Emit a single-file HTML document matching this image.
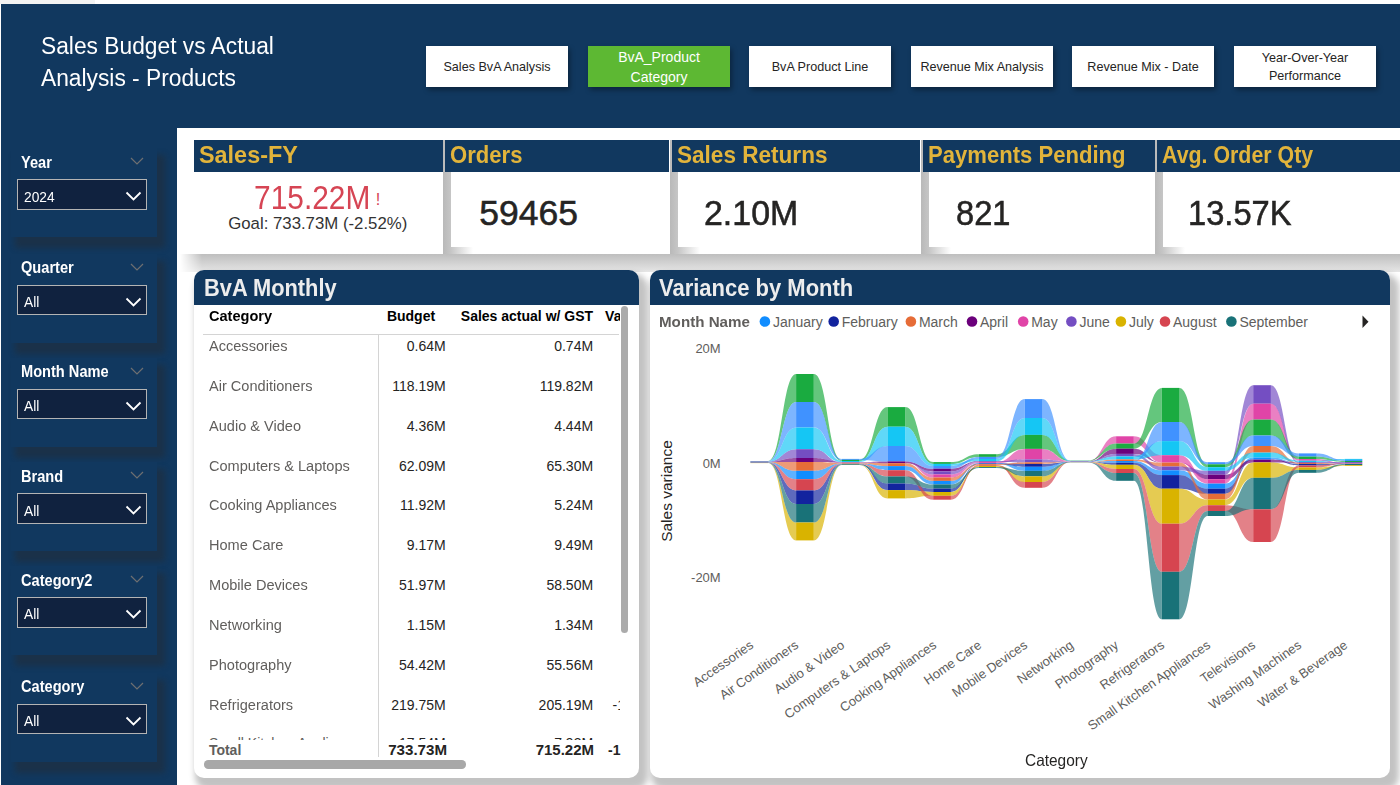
<!DOCTYPE html>
<html><head><meta charset="utf-8"><style>
html,body{margin:0;padding:0;}
body{width:1400px;height:785px;position:relative;overflow:hidden;background:#FFFFFF;font-family:"Liberation Sans", sans-serif;}
.t{position:absolute;white-space:nowrap;}
.btn{position:absolute;display:flex;align-items:center;justify-content:center;text-align:center;font-size:12.6px;line-height:18px;box-shadow:2px 3px 5px rgba(0,0,0,0.35);}
</style></head><body>
<div style="position:absolute;left:1px;top:4px;width:1399px;height:781px;background:#11385F;"></div>
<div style="position:absolute;left:0px;top:0px;width:95px;height:4px;background:#F3F3F3;"></div>
<div class="t" style="left:40.8px;top:35.33px;font-size:23px;line-height:23px;color:#fff;font-weight:400;transform:scaleX(0.99);transform-origin:left center;">Sales Budget vs Actual</div>
<div class="t" style="left:40.8px;top:66.73px;font-size:23px;line-height:23px;color:#fff;font-weight:400;transform:scaleX(0.99);transform-origin:left center;">Analysis - Products</div>
<div class="btn" style="left:426px;top:46px;width:142px;height:41px;background:#FFFFFF;color:#252423;">Sales BvA Analysis</div>
<div class="btn" style="left:588px;top:46px;width:142px;height:41px;background:#5DB833;color:#FFFFFF;font-size:14px;line-height:19.6px;padding-top:2px;box-sizing:border-box;">BvA_Product<br>Category</div>
<div class="btn" style="left:749px;top:46px;width:142px;height:41px;background:#FFFFFF;color:#252423;">BvA Product Line</div>
<div class="btn" style="left:911px;top:46px;width:142px;height:41px;background:#FFFFFF;color:#252423;">Revenue Mix Analysis</div>
<div class="btn" style="left:1072px;top:46px;width:142px;height:41px;background:#FFFFFF;color:#252423;">Revenue Mix - Date</div>
<div class="btn" style="left:1234px;top:46px;width:142px;height:41px;background:#FFFFFF;color:#252423;">Year-Over-Year<br>Performance</div>
<div style="position:absolute;left:11px;top:148.4px;width:146px;height:89px;background:#11385F;box-shadow:6px 9px 6px 2px rgba(40,40,42,0.42);"></div>
<div class="t" style="left:21px;top:153.93px;font-size:16.5px;line-height:16.5px;color:#FFFFFF;font-weight:700;transform:scaleX(0.885);transform-origin:left center;">Year</div>
<svg style="position:absolute;left:129.5px;top:157.4px" width="14" height="9"><polyline points="1,1 7,7 13,1" fill="none" stroke="#6E6F71" stroke-width="1.2"/></svg>
<div style="position:absolute;left:17px;top:179.4px;width:130px;height:30.5px;background:#10223F;border:1.5px solid #B4B4B4;box-sizing:border-box;"></div>
<div class="t" style="left:24px;top:189.53px;font-size:14.5px;line-height:14.5px;color:#FFFFFF;font-weight:400;transform:scaleX(0.95);transform-origin:left center;">2024</div>
<svg style="position:absolute;left:124.8px;top:191.4px" width="18" height="11"><polyline points="1.5,1.5 8.5,8.5 15.5,1.5" fill="none" stroke="#FFFFFF" stroke-width="1.8"/></svg>
<div style="position:absolute;left:11px;top:253.7px;width:146px;height:89px;background:#11385F;box-shadow:6px 9px 6px 2px rgba(40,40,42,0.42);"></div>
<div class="t" style="left:21px;top:259.23px;font-size:16.5px;line-height:16.5px;color:#FFFFFF;font-weight:700;transform:scaleX(0.885);transform-origin:left center;">Quarter</div>
<svg style="position:absolute;left:129.5px;top:262.7px" width="14" height="9"><polyline points="1,1 7,7 13,1" fill="none" stroke="#6E6F71" stroke-width="1.2"/></svg>
<div style="position:absolute;left:17px;top:284.7px;width:130px;height:30.5px;background:#10223F;border:1.5px solid #B4B4B4;box-sizing:border-box;"></div>
<div class="t" style="left:24px;top:294.83px;font-size:14.5px;line-height:14.5px;color:#FFFFFF;font-weight:400;transform:scaleX(0.95);transform-origin:left center;">All</div>
<svg style="position:absolute;left:124.8px;top:296.7px" width="18" height="11"><polyline points="1.5,1.5 8.5,8.5 15.5,1.5" fill="none" stroke="#FFFFFF" stroke-width="1.8"/></svg>
<div style="position:absolute;left:11px;top:357.6px;width:146px;height:89px;background:#11385F;box-shadow:6px 9px 6px 2px rgba(40,40,42,0.42);"></div>
<div class="t" style="left:21px;top:363.13px;font-size:16.5px;line-height:16.5px;color:#FFFFFF;font-weight:700;transform:scaleX(0.885);transform-origin:left center;">Month Name</div>
<svg style="position:absolute;left:129.5px;top:366.6px" width="14" height="9"><polyline points="1,1 7,7 13,1" fill="none" stroke="#6E6F71" stroke-width="1.2"/></svg>
<div style="position:absolute;left:17px;top:388.6px;width:130px;height:30.5px;background:#10223F;border:1.5px solid #B4B4B4;box-sizing:border-box;"></div>
<div class="t" style="left:24px;top:398.73px;font-size:14.5px;line-height:14.5px;color:#FFFFFF;font-weight:400;transform:scaleX(0.95);transform-origin:left center;">All</div>
<svg style="position:absolute;left:124.8px;top:400.6px" width="18" height="11"><polyline points="1.5,1.5 8.5,8.5 15.5,1.5" fill="none" stroke="#FFFFFF" stroke-width="1.8"/></svg>
<div style="position:absolute;left:11px;top:462.4px;width:146px;height:89px;background:#11385F;box-shadow:6px 9px 6px 2px rgba(40,40,42,0.42);"></div>
<div class="t" style="left:21px;top:467.93px;font-size:16.5px;line-height:16.5px;color:#FFFFFF;font-weight:700;transform:scaleX(0.885);transform-origin:left center;">Brand</div>
<svg style="position:absolute;left:129.5px;top:471.4px" width="14" height="9"><polyline points="1,1 7,7 13,1" fill="none" stroke="#6E6F71" stroke-width="1.2"/></svg>
<div style="position:absolute;left:17px;top:493.4px;width:130px;height:30.5px;background:#10223F;border:1.5px solid #B4B4B4;box-sizing:border-box;"></div>
<div class="t" style="left:24px;top:503.53px;font-size:14.5px;line-height:14.5px;color:#FFFFFF;font-weight:400;transform:scaleX(0.95);transform-origin:left center;">All</div>
<svg style="position:absolute;left:124.8px;top:505.4px" width="18" height="11"><polyline points="1.5,1.5 8.5,8.5 15.5,1.5" fill="none" stroke="#FFFFFF" stroke-width="1.8"/></svg>
<div style="position:absolute;left:11px;top:566px;width:146px;height:89px;background:#11385F;box-shadow:6px 9px 6px 2px rgba(40,40,42,0.42);"></div>
<div class="t" style="left:21px;top:571.53px;font-size:16.5px;line-height:16.5px;color:#FFFFFF;font-weight:700;transform:scaleX(0.885);transform-origin:left center;">Category2</div>
<svg style="position:absolute;left:129.5px;top:575px" width="14" height="9"><polyline points="1,1 7,7 13,1" fill="none" stroke="#6E6F71" stroke-width="1.2"/></svg>
<div style="position:absolute;left:17px;top:597px;width:130px;height:30.5px;background:#10223F;border:1.5px solid #B4B4B4;box-sizing:border-box;"></div>
<div class="t" style="left:24px;top:607.13px;font-size:14.5px;line-height:14.5px;color:#FFFFFF;font-weight:400;transform:scaleX(0.95);transform-origin:left center;">All</div>
<svg style="position:absolute;left:124.8px;top:609px" width="18" height="11"><polyline points="1.5,1.5 8.5,8.5 15.5,1.5" fill="none" stroke="#FFFFFF" stroke-width="1.8"/></svg>
<div style="position:absolute;left:11px;top:672.6px;width:146px;height:89px;background:#11385F;box-shadow:6px 9px 6px 2px rgba(40,40,42,0.42);"></div>
<div class="t" style="left:21px;top:678.13px;font-size:16.5px;line-height:16.5px;color:#FFFFFF;font-weight:700;transform:scaleX(0.885);transform-origin:left center;">Category</div>
<svg style="position:absolute;left:129.5px;top:681.6px" width="14" height="9"><polyline points="1,1 7,7 13,1" fill="none" stroke="#6E6F71" stroke-width="1.2"/></svg>
<div style="position:absolute;left:17px;top:703.6px;width:130px;height:30.5px;background:#10223F;border:1.5px solid #B4B4B4;box-sizing:border-box;"></div>
<div class="t" style="left:24px;top:713.73px;font-size:14.5px;line-height:14.5px;color:#FFFFFF;font-weight:400;transform:scaleX(0.95);transform-origin:left center;">All</div>
<svg style="position:absolute;left:124.8px;top:715.6px" width="18" height="11"><polyline points="1.5,1.5 8.5,8.5 15.5,1.5" fill="none" stroke="#FFFFFF" stroke-width="1.8"/></svg>
<div style="position:absolute;left:177px;top:128px;width:1223px;height:657px;background:#FFFFFF;"></div>
<div style="position:absolute;left:180px;top:254px;width:1220px;height:17.5px;background:linear-gradient(to bottom,#BEBEBE,#E6E6E6);-webkit-mask-image:linear-gradient(to right,transparent 0px,#000 22px);mask-image:linear-gradient(to right,transparent 0px,#000 22px);"></div>
<div style="position:absolute;left:193.6px;top:140px;width:249.4px;height:114px;background:#FFFFFF;"></div>
<div style="position:absolute;left:193.6px;top:140px;width:249.4px;height:32px;background:#11385F;"></div>
<div class="t" style="left:198.6px;top:142.58px;font-size:24px;line-height:24px;color:#E2B43B;font-weight:700;transform:scaleX(0.975);transform-origin:left center;">Sales-FY</div>
<div style="position:absolute;left:443px;top:140px;width:8px;height:114px;background:linear-gradient(to right,#B9B9B9,#C6C6C6);"></div>
<div style="position:absolute;left:451px;top:172px;width:217.60000000000002px;height:82px;background:#FFFFFF;"></div>
<div style="position:absolute;left:451px;top:247px;width:22px;height:7px;background:linear-gradient(to right,#C6C6C6,rgba(255,255,255,0));"></div>
<div style="position:absolute;left:445px;top:140px;width:223.60000000000002px;height:32px;background:#11385F;"></div>
<div class="t" style="left:450px;top:142.58px;font-size:24px;line-height:24px;color:#E2B43B;font-weight:700;transform:scaleX(0.92);transform-origin:left center;">Orders</div>
<div style="position:absolute;left:669.8px;top:140px;width:8px;height:114px;background:linear-gradient(to right,#B9B9B9,#C6C6C6);"></div>
<div style="position:absolute;left:677.8px;top:172px;width:241.80000000000007px;height:82px;background:#FFFFFF;"></div>
<div style="position:absolute;left:677.8px;top:247px;width:22px;height:7px;background:linear-gradient(to right,#C6C6C6,rgba(255,255,255,0));"></div>
<div style="position:absolute;left:671.8px;top:140px;width:247.80000000000007px;height:32px;background:#11385F;"></div>
<div class="t" style="left:676.8px;top:142.58px;font-size:24px;line-height:24px;color:#E2B43B;font-weight:700;transform:scaleX(0.94);transform-origin:left center;">Sales Returns</div>
<div style="position:absolute;left:921px;top:140px;width:8px;height:114px;background:linear-gradient(to right,#B9B9B9,#C6C6C6);"></div>
<div style="position:absolute;left:929px;top:172px;width:225.5999999999999px;height:82px;background:#FFFFFF;"></div>
<div style="position:absolute;left:929px;top:247px;width:22px;height:7px;background:linear-gradient(to right,#C6C6C6,rgba(255,255,255,0));"></div>
<div style="position:absolute;left:923px;top:140px;width:231.5999999999999px;height:32px;background:#11385F;"></div>
<div class="t" style="left:928px;top:142.58px;font-size:24px;line-height:24px;color:#E2B43B;font-weight:700;transform:scaleX(0.92);transform-origin:left center;">Payments Pending</div>
<div style="position:absolute;left:1154.8px;top:140px;width:8px;height:114px;background:linear-gradient(to right,#B9B9B9,#C6C6C6);"></div>
<div style="position:absolute;left:1162.8px;top:172px;width:237.20000000000005px;height:82px;background:#FFFFFF;"></div>
<div style="position:absolute;left:1162.8px;top:247px;width:22px;height:7px;background:linear-gradient(to right,#C6C6C6,rgba(255,255,255,0));"></div>
<div style="position:absolute;left:1156.8px;top:140px;width:243.20000000000005px;height:32px;background:#11385F;"></div>
<div class="t" style="left:1161.8px;top:142.58px;font-size:24px;line-height:24px;color:#E2B43B;font-weight:700;transform:scaleX(0.89);transform-origin:left center;">Avg. Order Qty</div>
<div class="t" style="left:253.8px;top:181.99px;font-size:32.5px;line-height:32.5px;color:#D64554;font-weight:400;transform:scaleX(0.92);transform-origin:left center;">715.22M</div>
<div class="t" style="left:375.8px;top:191.03px;font-size:16.5px;line-height:16.5px;color:#D64554;font-weight:400;">!</div>
<div class="t" style="left:228.2px;top:215.78px;font-size:16.8px;line-height:16.8px;color:#333333;font-weight:400;">Goal: 733.73M (-2.52%)</div>
<div class="t" style="left:479.3px;top:195.65px;font-size:35.5px;line-height:35.5px;color:#252423;font-weight:400;-webkit-text-stroke:0.55px #252423;">59465</div>
<div class="t" style="left:704.0px;top:195.65px;font-size:35.5px;line-height:35.5px;color:#252423;font-weight:400;transform:scaleX(0.955);transform-origin:left center;-webkit-text-stroke:0.55px #252423;">2.10M</div>
<div class="t" style="left:956.4px;top:195.65px;font-size:35.5px;line-height:35.5px;color:#252423;font-weight:400;transform:scaleX(0.92);transform-origin:left center;-webkit-text-stroke:0.55px #252423;">821</div>
<div class="t" style="left:1187.8px;top:195.75px;font-size:35.5px;line-height:35.5px;color:#252423;font-weight:400;transform:scaleX(0.92);transform-origin:left center;-webkit-text-stroke:0.55px #252423;">13.57K</div>
<div style="position:absolute;left:194.4px;top:269.6px;width:444.3px;height:508.4px;background:#fff;border-radius:10px;box-shadow:5px 8px 6px 4px rgba(0,0,0,0.24);overflow:hidden;"><div style="position:absolute;left:0;top:0;width:100%;height:35.6px;background:#11385F;"></div></div>
<div class="t" style="left:204px;top:275.68px;font-size:24px;line-height:24px;color:#EDEDED;font-weight:700;transform:scaleX(0.91);transform-origin:left center;">BvA Monthly</div>
<div class="t" style="left:208.9px;top:308.95px;font-size:14px;line-height:14px;color:#000;font-weight:700;transform:scaleX(1.04);transform-origin:left center;">Category</div>
<div class="t" style="left:435.1px;top:308.95px;font-size:14px;line-height:14px;color:#000;font-weight:700;transform:translateX(-100%);transform-origin:right center;">Budget</div>
<div class="t" style="left:593.1px;top:308.95px;font-size:14px;line-height:14px;color:#000;font-weight:700;transform:translateX(-100%);transform-origin:right center;">Sales actual w/ GST</div>
<div style="position:absolute;left:600px;top:300px;width:19.7px;height:30px;overflow:hidden;"><div class="t" style="left:5.1px;top:8.95px;font-size:14px;line-height:14px;color:#000;font-weight:700;">Va</div></div>
<div style="position:absolute;left:203.4px;top:333.8px;width:415.4px;height:1px;background:#D4D4D4;"></div>
<div style="position:absolute;left:378.3px;top:334px;width:1px;height:423px;background:#D4D4D4;"></div>
<div class="t" style="left:208.9px;top:338.85px;font-size:14px;line-height:14px;color:#605E5C;font-weight:400;transform:scaleX(1.04);transform-origin:left center;">Accessories</div>
<div class="t" style="left:445.7px;top:338.85px;font-size:14px;line-height:14px;color:#252423;font-weight:400;transform:translateX(-100%);transform-origin:right center;">0.64M</div>
<div class="t" style="left:593.1px;top:338.85px;font-size:14px;line-height:14px;color:#252423;font-weight:400;transform:translateX(-100%);transform-origin:right center;">0.74M</div>
<div class="t" style="left:208.9px;top:378.75px;font-size:14px;line-height:14px;color:#605E5C;font-weight:400;transform:scaleX(1.04);transform-origin:left center;">Air Conditioners</div>
<div class="t" style="left:445.7px;top:378.75px;font-size:14px;line-height:14px;color:#252423;font-weight:400;transform:translateX(-100%);transform-origin:right center;">118.19M</div>
<div class="t" style="left:593.1px;top:378.75px;font-size:14px;line-height:14px;color:#252423;font-weight:400;transform:translateX(-100%);transform-origin:right center;">119.82M</div>
<div class="t" style="left:208.9px;top:418.65px;font-size:14px;line-height:14px;color:#605E5C;font-weight:400;transform:scaleX(1.04);transform-origin:left center;">Audio &amp; Video</div>
<div class="t" style="left:445.7px;top:418.65px;font-size:14px;line-height:14px;color:#252423;font-weight:400;transform:translateX(-100%);transform-origin:right center;">4.36M</div>
<div class="t" style="left:593.1px;top:418.65px;font-size:14px;line-height:14px;color:#252423;font-weight:400;transform:translateX(-100%);transform-origin:right center;">4.44M</div>
<div class="t" style="left:208.9px;top:458.55px;font-size:14px;line-height:14px;color:#605E5C;font-weight:400;transform:scaleX(1.04);transform-origin:left center;">Computers &amp; Laptops</div>
<div class="t" style="left:445.7px;top:458.55px;font-size:14px;line-height:14px;color:#252423;font-weight:400;transform:translateX(-100%);transform-origin:right center;">62.09M</div>
<div class="t" style="left:593.1px;top:458.55px;font-size:14px;line-height:14px;color:#252423;font-weight:400;transform:translateX(-100%);transform-origin:right center;">65.30M</div>
<div class="t" style="left:208.9px;top:498.45px;font-size:14px;line-height:14px;color:#605E5C;font-weight:400;transform:scaleX(1.04);transform-origin:left center;">Cooking Appliances</div>
<div class="t" style="left:445.7px;top:498.45px;font-size:14px;line-height:14px;color:#252423;font-weight:400;transform:translateX(-100%);transform-origin:right center;">11.92M</div>
<div class="t" style="left:593.1px;top:498.45px;font-size:14px;line-height:14px;color:#252423;font-weight:400;transform:translateX(-100%);transform-origin:right center;">5.24M</div>
<div class="t" style="left:208.9px;top:538.35px;font-size:14px;line-height:14px;color:#605E5C;font-weight:400;transform:scaleX(1.04);transform-origin:left center;">Home Care</div>
<div class="t" style="left:445.7px;top:538.35px;font-size:14px;line-height:14px;color:#252423;font-weight:400;transform:translateX(-100%);transform-origin:right center;">9.17M</div>
<div class="t" style="left:593.1px;top:538.35px;font-size:14px;line-height:14px;color:#252423;font-weight:400;transform:translateX(-100%);transform-origin:right center;">9.49M</div>
<div class="t" style="left:208.9px;top:578.25px;font-size:14px;line-height:14px;color:#605E5C;font-weight:400;transform:scaleX(1.04);transform-origin:left center;">Mobile Devices</div>
<div class="t" style="left:445.7px;top:578.25px;font-size:14px;line-height:14px;color:#252423;font-weight:400;transform:translateX(-100%);transform-origin:right center;">51.97M</div>
<div class="t" style="left:593.1px;top:578.25px;font-size:14px;line-height:14px;color:#252423;font-weight:400;transform:translateX(-100%);transform-origin:right center;">58.50M</div>
<div class="t" style="left:208.9px;top:618.15px;font-size:14px;line-height:14px;color:#605E5C;font-weight:400;transform:scaleX(1.04);transform-origin:left center;">Networking</div>
<div class="t" style="left:445.7px;top:618.15px;font-size:14px;line-height:14px;color:#252423;font-weight:400;transform:translateX(-100%);transform-origin:right center;">1.15M</div>
<div class="t" style="left:593.1px;top:618.15px;font-size:14px;line-height:14px;color:#252423;font-weight:400;transform:translateX(-100%);transform-origin:right center;">1.34M</div>
<div class="t" style="left:208.9px;top:658.05px;font-size:14px;line-height:14px;color:#605E5C;font-weight:400;transform:scaleX(1.04);transform-origin:left center;">Photography</div>
<div class="t" style="left:445.7px;top:658.05px;font-size:14px;line-height:14px;color:#252423;font-weight:400;transform:translateX(-100%);transform-origin:right center;">54.42M</div>
<div class="t" style="left:593.1px;top:658.05px;font-size:14px;line-height:14px;color:#252423;font-weight:400;transform:translateX(-100%);transform-origin:right center;">55.56M</div>
<div class="t" style="left:208.9px;top:697.95px;font-size:14px;line-height:14px;color:#605E5C;font-weight:400;transform:scaleX(1.04);transform-origin:left center;">Refrigerators</div>
<div class="t" style="left:445.7px;top:697.95px;font-size:14px;line-height:14px;color:#252423;font-weight:400;transform:translateX(-100%);transform-origin:right center;">219.75M</div>
<div class="t" style="left:593.1px;top:697.95px;font-size:14px;line-height:14px;color:#252423;font-weight:400;transform:translateX(-100%);transform-origin:right center;">205.19M</div>
<div style="position:absolute;left:600px;top:690px;width:19.7px;height:30px;overflow:hidden;"><div class="t" style="left:12.5px;top:7.95px;font-size:14px;line-height:14px;color:#252423;font-weight:400;">-14.56M</div></div>
<div style="position:absolute;left:200px;top:735px;width:420px;height:4.5px;overflow:hidden;background:transparent;"><div class="t" style="left:8.9px;top:1.45px;font-size:14px;line-height:14px;color:#605E5C;font-weight:400;">Small Kitchen Appliances</div><div class="t" style="left:245.7px;top:1.45px;font-size:14px;line-height:14px;color:#252423;font-weight:400;transform:translateX(-100%);transform-origin:right center;">17.54M</div><div class="t" style="left:393.1px;top:1.45px;font-size:14px;line-height:14px;color:#252423;font-weight:400;transform:translateX(-100%);transform-origin:right center;">7.93M</div></div>
<div class="t" style="left:208.9px;top:742.95px;font-size:14px;line-height:14px;color:#605E5C;font-weight:700;">Total</div>
<div class="t" style="left:446.5px;top:742.95px;font-size:14px;line-height:14px;color:#252423;font-weight:700;transform:translateX(-100%) scaleX(1.08);transform-origin:right center;">733.73M</div>
<div class="t" style="left:593.5px;top:742.95px;font-size:14px;line-height:14px;color:#252423;font-weight:700;transform:translateX(-100%) scaleX(1.07);transform-origin:right center;">715.22M</div>
<div class="t" style="left:608px;top:742.95px;font-size:14px;line-height:14px;color:#252423;font-weight:700;">-1</div>
<div style="position:absolute;left:620.5px;top:306px;width:7.3px;height:327px;background:#ABABAB;border-radius:3.6px;"></div>
<div style="position:absolute;left:204px;top:760px;width:262.3px;height:8.5px;background:#A8A8A8;border-radius:4.25px;"></div>
<div style="position:absolute;left:650px;top:270px;width:740px;height:508px;background:#fff;border-radius:10px;box-shadow:5px 8px 6px 4px rgba(0,0,0,0.24);overflow:hidden;"><div style="position:absolute;left:0;top:0;width:100%;height:35px;background:#11385F;"></div></div>
<div class="t" style="left:658.6px;top:275.68px;font-size:24px;line-height:24px;color:#EDEDED;font-weight:700;transform:scaleX(0.916);transform-origin:left center;">Variance by Month</div>
<div class="t" style="left:658.6px;top:314.83px;font-size:14.5px;line-height:14.5px;color:#605E5C;font-weight:700;transform:scaleX(1.045);transform-origin:left center;">Month Name</div>
<div class="t" style="left:772.9px;top:315.25px;font-size:14px;line-height:14px;color:#605E5C;font-weight:400;">January</div>
<div class="t" style="left:841.7px;top:315.25px;font-size:14px;line-height:14px;color:#605E5C;font-weight:400;">February</div>
<div class="t" style="left:918.9px;top:315.25px;font-size:14px;line-height:14px;color:#605E5C;font-weight:400;">March</div>
<div class="t" style="left:980px;top:315.25px;font-size:14px;line-height:14px;color:#605E5C;font-weight:400;">April</div>
<div class="t" style="left:1031.2px;top:315.25px;font-size:14px;line-height:14px;color:#605E5C;font-weight:400;">May</div>
<div class="t" style="left:1079.4px;top:315.25px;font-size:14px;line-height:14px;color:#605E5C;font-weight:400;">June</div>
<div class="t" style="left:1128.9px;top:315.25px;font-size:14px;line-height:14px;color:#605E5C;font-weight:400;">July</div>
<div class="t" style="left:1173px;top:315.25px;font-size:14px;line-height:14px;color:#605E5C;font-weight:400;">August</div>
<div class="t" style="left:1239.4px;top:315.25px;font-size:14px;line-height:14px;color:#605E5C;font-weight:400;">September</div>
<div class="t" style="left:720.7px;top:342.30px;font-size:13px;line-height:13px;color:#605E5C;font-weight:400;transform:translateX(-100%);transform-origin:right center;">20M</div>
<div class="t" style="left:720.7px;top:456.80px;font-size:13px;line-height:13px;color:#605E5C;font-weight:400;transform:translateX(-100%);transform-origin:right center;">0M</div>
<div class="t" style="left:720.7px;top:570.80px;font-size:13px;line-height:13px;color:#605E5C;font-weight:400;transform:translateX(-100%);transform-origin:right center;">-20M</div>
<div class="t" style="left:667px;top:490.5px;font-size:15.5px;line-height:15.5px;color:#252423;transform:translate(-50%,-50%) rotate(-90deg);">Sales variance</div>
<div class="t" style="left:1025px;top:752.33px;font-size:16.5px;line-height:16.5px;color:#252423;font-weight:400;transform:scaleX(0.936);transform-origin:left center;">Category</div>
<svg style="position:absolute;left:0;top:0" width="1400" height="785"><path d="M768.1,462.2 C782.1,462.2 782.1,470.8 796.1,470.8 L796.1,479.2 C782.1,479.2 782.1,462.4 768.1,462.4 Z" fill="#118DFF" fill-opacity="0.68"/><path d="M768.1,462.6 C782.1,462.6 782.1,490.4 796.1,490.4 L796.1,504.0 C782.1,504.0 782.1,462.8 768.1,462.8 Z" fill="#12239E" fill-opacity="0.68"/><path d="M768.1,462.0 C782.1,462.0 782.1,462.0 796.1,462.0 L796.1,470.8 C782.1,470.8 782.1,462.2 768.1,462.2 Z" fill="#E66C37" fill-opacity="0.68"/><path d="M768.1,461.8 C782.1,461.8 782.1,458.0 796.1,458.0 L796.1,462.0 C782.1,462.0 782.1,462.0 768.1,462.0 Z" fill="#6B007B" fill-opacity="0.68"/><path d="M768.1,461.6 C782.1,461.6 782.1,449.2 796.1,449.2 L796.1,458.0 C782.1,458.0 782.1,461.8 768.1,461.8 Z" fill="#744EC2" fill-opacity="0.68"/><path d="M768.1,463.0 C782.1,463.0 782.1,522.5 796.1,522.5 L796.1,540.4 C782.1,540.4 782.1,463.1 768.1,463.1 Z" fill="#D9B300" fill-opacity="0.68"/><path d="M768.1,462.4 C782.1,462.4 782.1,479.2 796.1,479.2 L796.1,490.4 C782.1,490.4 782.1,462.6 768.1,462.6 Z" fill="#D64550" fill-opacity="0.68"/><path d="M768.1,462.8 C782.1,462.8 782.1,504.0 796.1,504.0 L796.1,522.5 C782.1,522.5 782.1,463.0 768.1,463.0 Z" fill="#197278" fill-opacity="0.68"/><path d="M768.1,461.0 C782.1,461.0 782.1,374.0 796.1,374.0 L796.1,402.0 C782.1,402.0 782.1,461.2 768.1,461.2 Z" fill="#1AAB40" fill-opacity="0.68"/><path d="M768.1,461.4 C782.1,461.4 782.1,427.5 796.1,427.5 L796.1,449.2 C782.1,449.2 782.1,461.6 768.1,461.6 Z" fill="#15C6F4" fill-opacity="0.68"/><path d="M768.1,461.2 C782.1,461.2 782.1,402.0 796.1,402.0 L796.1,427.5 C782.1,427.5 782.1,461.4 768.1,461.4 Z" fill="#4092FF" fill-opacity="0.68"/><path d="M813.9,470.8 C827.8,470.8 827.8,463.6 841.8,463.6 L841.8,463.8 C827.8,463.8 827.8,479.2 813.9,479.2 Z" fill="#118DFF" fill-opacity="0.68"/><path d="M813.9,490.4 C827.8,490.4 827.8,464.0 841.8,464.0 L841.8,464.2 C827.8,464.2 827.8,504.0 813.9,504.0 Z" fill="#12239E" fill-opacity="0.68"/><path d="M813.9,462.0 C827.8,462.0 827.8,462.8 841.8,462.8 L841.8,463.6 C827.8,463.6 827.8,470.8 813.9,470.8 Z" fill="#E66C37" fill-opacity="0.68"/><path d="M813.9,458.0 C827.8,458.0 827.8,462.0 841.8,462.0 L841.8,462.2 C827.8,462.2 827.8,462.0 813.9,462.0 Z" fill="#6B007B" fill-opacity="0.68"/><path d="M813.9,462.0 C827.8,462.0 827.8,462.2 841.8,462.2 L841.8,462.5 C827.8,462.5 827.8,462.0 813.9,462.0 Z" fill="#E044A7" fill-opacity="0.68"/><path d="M813.9,449.2 C827.8,449.2 827.8,462.5 841.8,462.5 L841.8,462.8 C827.8,462.8 827.8,458.0 813.9,458.0 Z" fill="#744EC2" fill-opacity="0.68"/><path d="M813.9,522.5 C827.8,522.5 827.8,464.9 841.8,464.9 L841.8,465.0 C827.8,465.0 827.8,540.4 813.9,540.4 Z" fill="#D9B300" fill-opacity="0.68"/><path d="M813.9,479.2 C827.8,479.2 827.8,463.8 841.8,463.8 L841.8,464.0 C827.8,464.0 827.8,490.4 813.9,490.4 Z" fill="#D64550" fill-opacity="0.68"/><path d="M813.9,504.0 C827.8,504.0 827.8,464.2 841.8,464.2 L841.8,464.9 C827.8,464.9 827.8,522.5 813.9,522.5 Z" fill="#197278" fill-opacity="0.68"/><path d="M813.9,374.0 C827.8,374.0 827.8,459.9 841.8,459.9 L841.8,461.0 C827.8,461.0 827.8,402.0 813.9,402.0 Z" fill="#1AAB40" fill-opacity="0.68"/><path d="M813.9,427.5 C827.8,427.5 827.8,461.0 841.8,461.0 L841.8,462.0 C827.8,462.0 827.8,449.2 813.9,449.2 Z" fill="#15C6F4" fill-opacity="0.68"/><path d="M813.9,402.0 C827.8,402.0 827.8,458.9 841.8,458.9 L841.8,459.9 C827.8,459.9 827.8,427.5 813.9,427.5 Z" fill="#4092FF" fill-opacity="0.68"/><path d="M859.5,463.6 C873.5,463.6 873.5,466.1 887.5,466.1 L887.5,470.2 C873.5,470.2 873.5,463.8 859.5,463.8 Z" fill="#118DFF" fill-opacity="0.68"/><path d="M859.5,464.0 C873.5,464.0 873.5,483.5 887.5,483.5 L887.5,490.1 C873.5,490.1 873.5,464.2 859.5,464.2 Z" fill="#12239E" fill-opacity="0.68"/><path d="M859.5,462.8 C873.5,462.8 873.5,463.2 887.5,463.2 L887.5,466.1 C873.5,466.1 873.5,463.6 859.5,463.6 Z" fill="#E66C37" fill-opacity="0.68"/><path d="M859.5,462.0 C873.5,462.0 873.5,461.4 887.5,461.4 L887.5,463.2 C873.5,463.2 873.5,462.2 859.5,462.2 Z" fill="#6B007B" fill-opacity="0.68"/><path d="M859.5,462.2 C873.5,462.2 873.5,461.4 887.5,461.4 L887.5,461.4 C873.5,461.4 873.5,462.5 859.5,462.5 Z" fill="#E044A7" fill-opacity="0.68"/><path d="M859.5,462.5 C873.5,462.5 873.5,461.4 887.5,461.4 L887.5,461.4 C873.5,461.4 873.5,462.8 859.5,462.8 Z" fill="#744EC2" fill-opacity="0.68"/><path d="M859.5,464.9 C873.5,464.9 873.5,490.1 887.5,490.1 L887.5,498.4 C873.5,498.4 873.5,465.0 859.5,465.0 Z" fill="#D9B300" fill-opacity="0.68"/><path d="M859.5,463.8 C873.5,463.8 873.5,470.2 887.5,470.2 L887.5,476.4 C873.5,476.4 873.5,464.0 859.5,464.0 Z" fill="#D64550" fill-opacity="0.68"/><path d="M859.5,464.2 C873.5,464.2 873.5,476.4 887.5,476.4 L887.5,483.5 C873.5,483.5 873.5,464.9 859.5,464.9 Z" fill="#197278" fill-opacity="0.68"/><path d="M859.5,459.9 C873.5,459.9 873.5,407.1 887.5,407.1 L887.5,426.7 C873.5,426.7 873.5,461.0 859.5,461.0 Z" fill="#1AAB40" fill-opacity="0.68"/><path d="M859.5,461.0 C873.5,461.0 873.5,426.7 887.5,426.7 L887.5,446.0 C873.5,446.0 873.5,462.0 859.5,462.0 Z" fill="#15C6F4" fill-opacity="0.68"/><path d="M859.5,458.9 C873.5,458.9 873.5,446.0 887.5,446.0 L887.5,461.4 C873.5,461.4 873.5,459.9 859.5,459.9 Z" fill="#4092FF" fill-opacity="0.68"/><path d="M905.2,466.1 C919.2,466.1 919.2,480.9 933.2,480.9 L933.2,484.4 C919.2,484.4 919.2,470.2 905.2,470.2 Z" fill="#118DFF" fill-opacity="0.68"/><path d="M905.2,483.5 C919.2,483.5 919.2,488.6 933.2,488.6 L933.2,492.0 C919.2,492.0 919.2,490.1 905.2,490.1 Z" fill="#12239E" fill-opacity="0.68"/><path d="M905.2,463.2 C919.2,463.2 919.2,477.5 933.2,477.5 L933.2,480.9 C919.2,480.9 919.2,466.1 905.2,466.1 Z" fill="#E66C37" fill-opacity="0.68"/><path d="M905.2,461.4 C919.2,461.4 919.2,468.7 933.2,468.7 L933.2,471.4 C919.2,471.4 919.2,463.2 905.2,463.2 Z" fill="#6B007B" fill-opacity="0.68"/><path d="M905.2,461.4 C919.2,461.4 919.2,474.4 933.2,474.4 L933.2,477.5 C919.2,477.5 919.2,461.4 905.2,461.4 Z" fill="#E044A7" fill-opacity="0.68"/><path d="M905.2,461.4 C919.2,461.4 919.2,471.4 933.2,471.4 L933.2,474.4 C919.2,474.4 919.2,461.4 905.2,461.4 Z" fill="#744EC2" fill-opacity="0.68"/><path d="M905.2,490.1 C919.2,490.1 919.2,492.0 933.2,492.0 L933.2,495.8 C919.2,495.8 919.2,498.4 905.2,498.4 Z" fill="#D9B300" fill-opacity="0.68"/><path d="M905.2,470.2 C919.2,470.2 919.2,495.8 933.2,495.8 L933.2,499.7 C919.2,499.7 919.2,476.4 905.2,476.4 Z" fill="#D64550" fill-opacity="0.68"/><path d="M905.2,476.4 C919.2,476.4 919.2,484.4 933.2,484.4 L933.2,488.6 C919.2,488.6 919.2,483.5 905.2,483.5 Z" fill="#197278" fill-opacity="0.68"/><path d="M905.2,407.1 C919.2,407.1 919.2,462.1 933.2,462.1 L933.2,463.9 C919.2,463.9 919.2,426.7 905.2,426.7 Z" fill="#1AAB40" fill-opacity="0.68"/><path d="M905.2,426.7 C919.2,426.7 919.2,463.9 933.2,463.9 L933.2,466.0 C919.2,466.0 919.2,446.0 905.2,446.0 Z" fill="#15C6F4" fill-opacity="0.68"/><path d="M905.2,446.0 C919.2,446.0 919.2,466.0 933.2,466.0 L933.2,468.7 C919.2,468.7 919.2,461.4 905.2,461.4 Z" fill="#4092FF" fill-opacity="0.68"/><path d="M950.9,480.9 C964.9,480.9 964.9,463.0 978.9,463.0 L978.9,463.5 C964.9,463.5 964.9,484.4 950.9,484.4 Z" fill="#118DFF" fill-opacity="0.68"/><path d="M950.9,488.6 C964.9,488.6 964.9,463.5 978.9,463.5 L978.9,464.1 C964.9,464.1 964.9,492.0 950.9,492.0 Z" fill="#12239E" fill-opacity="0.68"/><path d="M950.9,477.5 C964.9,477.5 964.9,464.1 978.9,464.1 L978.9,464.9 C964.9,464.9 964.9,480.9 950.9,480.9 Z" fill="#E66C37" fill-opacity="0.68"/><path d="M950.9,468.7 C964.9,468.7 964.9,461.1 978.9,461.1 L978.9,461.6 C964.9,461.6 964.9,471.4 950.9,471.4 Z" fill="#6B007B" fill-opacity="0.68"/><path d="M950.9,474.4 C964.9,474.4 964.9,462.1 978.9,462.1 L978.9,463.0 C964.9,463.0 964.9,477.5 950.9,477.5 Z" fill="#E044A7" fill-opacity="0.68"/><path d="M950.9,471.4 C964.9,471.4 964.9,461.6 978.9,461.6 L978.9,462.1 C964.9,462.1 964.9,474.4 950.9,474.4 Z" fill="#744EC2" fill-opacity="0.68"/><path d="M950.9,492.0 C964.9,492.0 964.9,465.8 978.9,465.8 L978.9,467.0 C964.9,467.0 964.9,495.8 950.9,495.8 Z" fill="#D9B300" fill-opacity="0.68"/><path d="M950.9,495.8 C964.9,495.8 964.9,464.9 978.9,464.9 L978.9,465.8 C964.9,465.8 964.9,499.7 950.9,499.7 Z" fill="#D64550" fill-opacity="0.68"/><path d="M950.9,484.4 C964.9,484.4 964.9,467.0 978.9,467.0 L978.9,467.9 C964.9,467.9 964.9,488.6 950.9,488.6 Z" fill="#197278" fill-opacity="0.68"/><path d="M950.9,462.1 C964.9,462.1 964.9,454.2 978.9,454.2 L978.9,456.9 C964.9,456.9 964.9,463.9 950.9,463.9 Z" fill="#1AAB40" fill-opacity="0.68"/><path d="M950.9,463.9 C964.9,463.9 964.9,459.0 978.9,459.0 L978.9,461.1 C964.9,461.1 964.9,466.0 950.9,466.0 Z" fill="#15C6F4" fill-opacity="0.68"/><path d="M950.9,466.0 C964.9,466.0 964.9,456.9 978.9,456.9 L978.9,459.0 C964.9,459.0 964.9,468.7 950.9,468.7 Z" fill="#4092FF" fill-opacity="0.68"/><path d="M996.6,463.0 C1010.7,463.0 1010.7,466.8 1024.7,466.8 L1024.7,470.9 C1010.7,470.9 1010.7,463.5 996.6,463.5 Z" fill="#118DFF" fill-opacity="0.68"/><path d="M996.6,463.5 C1010.7,463.5 1010.7,463.9 1024.7,463.9 L1024.7,466.8 C1010.7,466.8 1010.7,464.1 996.6,464.1 Z" fill="#12239E" fill-opacity="0.68"/><path d="M996.6,464.1 C1010.7,464.1 1010.7,462.3 1024.7,462.3 L1024.7,463.9 C1010.7,463.9 1010.7,464.9 996.6,464.9 Z" fill="#E66C37" fill-opacity="0.68"/><path d="M996.6,461.1 C1010.7,461.1 1010.7,462.3 1024.7,462.3 L1024.7,462.3 C1010.7,462.3 1010.7,461.6 996.6,461.6 Z" fill="#6B007B" fill-opacity="0.68"/><path d="M996.6,462.1 C1010.7,462.1 1010.7,448.9 1024.7,448.9 L1024.7,459.4 C1010.7,459.4 1010.7,463.0 996.6,463.0 Z" fill="#E044A7" fill-opacity="0.68"/><path d="M996.6,461.6 C1010.7,461.6 1010.7,459.4 1024.7,459.4 L1024.7,462.3 C1010.7,462.3 1010.7,462.1 996.6,462.1 Z" fill="#744EC2" fill-opacity="0.68"/><path d="M996.6,465.8 C1010.7,465.8 1010.7,476.3 1024.7,476.3 L1024.7,482.0 C1010.7,482.0 1010.7,467.0 996.6,467.0 Z" fill="#D9B300" fill-opacity="0.68"/><path d="M996.6,464.9 C1010.7,464.9 1010.7,482.0 1024.7,482.0 L1024.7,487.8 C1010.7,487.8 1010.7,465.8 996.6,465.8 Z" fill="#D64550" fill-opacity="0.68"/><path d="M996.6,467.0 C1010.7,467.0 1010.7,470.9 1024.7,470.9 L1024.7,476.3 C1010.7,476.3 1010.7,467.9 996.6,467.9 Z" fill="#197278" fill-opacity="0.68"/><path d="M996.6,454.2 C1010.7,454.2 1010.7,434.9 1024.7,434.9 L1024.7,448.9 C1010.7,448.9 1010.7,456.9 996.6,456.9 Z" fill="#1AAB40" fill-opacity="0.68"/><path d="M996.6,459.0 C1010.7,459.0 1010.7,418.0 1024.7,418.0 L1024.7,434.9 C1010.7,434.9 1010.7,461.1 996.6,461.1 Z" fill="#15C6F4" fill-opacity="0.68"/><path d="M996.6,456.9 C1010.7,456.9 1010.7,399.1 1024.7,399.1 L1024.7,418.0 C1010.7,418.0 1010.7,459.0 996.6,459.0 Z" fill="#4092FF" fill-opacity="0.68"/><path d="M1042.3,466.8 C1056.3,466.8 1056.3,461.8 1070.4,461.8 L1070.4,461.9 C1056.3,461.9 1056.3,470.9 1042.3,470.9 Z" fill="#118DFF" fill-opacity="0.68"/><path d="M1042.3,463.9 C1056.3,463.9 1056.3,461.9 1070.4,461.9 L1070.4,462.0 C1056.3,462.0 1056.3,466.8 1042.3,466.8 Z" fill="#12239E" fill-opacity="0.68"/><path d="M1042.3,462.3 C1056.3,462.3 1056.3,461.7 1070.4,461.7 L1070.4,461.8 C1056.3,461.8 1056.3,463.9 1042.3,463.9 Z" fill="#E66C37" fill-opacity="0.68"/><path d="M1042.3,462.3 C1056.3,462.3 1056.3,461.6 1070.4,461.6 L1070.4,461.7 C1056.3,461.7 1056.3,462.3 1042.3,462.3 Z" fill="#6B007B" fill-opacity="0.68"/><path d="M1042.3,448.9 C1056.3,448.9 1056.3,461.3 1070.4,461.3 L1070.4,461.5 C1056.3,461.5 1056.3,459.4 1042.3,459.4 Z" fill="#E044A7" fill-opacity="0.68"/><path d="M1042.3,459.4 C1056.3,459.4 1056.3,461.5 1070.4,461.5 L1070.4,461.6 C1056.3,461.6 1056.3,462.3 1042.3,462.3 Z" fill="#744EC2" fill-opacity="0.68"/><path d="M1042.3,476.3 C1056.3,476.3 1056.3,462.0 1070.4,462.0 L1070.4,462.1 C1056.3,462.1 1056.3,482.0 1042.3,482.0 Z" fill="#D9B300" fill-opacity="0.68"/><path d="M1042.3,482.0 C1056.3,482.0 1056.3,462.1 1070.4,462.1 L1070.4,462.2 C1056.3,462.2 1056.3,487.8 1042.3,487.8 Z" fill="#D64550" fill-opacity="0.68"/><path d="M1042.3,470.9 C1056.3,470.9 1056.3,462.2 1070.4,462.2 L1070.4,462.4 C1056.3,462.4 1056.3,476.3 1042.3,476.3 Z" fill="#197278" fill-opacity="0.68"/><path d="M1042.3,434.9 C1056.3,434.9 1056.3,460.6 1070.4,460.6 L1070.4,460.9 C1056.3,460.9 1056.3,448.9 1042.3,448.9 Z" fill="#1AAB40" fill-opacity="0.68"/><path d="M1042.3,418.0 C1056.3,418.0 1056.3,461.1 1070.4,461.1 L1070.4,461.3 C1056.3,461.3 1056.3,434.9 1042.3,434.9 Z" fill="#15C6F4" fill-opacity="0.68"/><path d="M1042.3,399.1 C1056.3,399.1 1056.3,460.9 1070.4,460.9 L1070.4,461.1 C1056.3,461.1 1056.3,418.0 1042.3,418.0 Z" fill="#4092FF" fill-opacity="0.68"/><path d="M1088.0,461.8 C1102.1,461.8 1102.1,461.0 1116.1,461.0 L1116.1,462.7 C1102.1,462.7 1102.1,461.9 1088.0,461.9 Z" fill="#118DFF" fill-opacity="0.68"/><path d="M1088.0,461.9 C1102.1,461.9 1102.1,462.7 1116.1,462.7 L1116.1,464.8 C1102.1,464.8 1102.1,462.0 1088.0,462.0 Z" fill="#12239E" fill-opacity="0.68"/><path d="M1088.0,461.7 C1102.1,461.7 1102.1,459.4 1116.1,459.4 L1116.1,461.0 C1102.1,461.0 1102.1,461.8 1088.0,461.8 Z" fill="#E66C37" fill-opacity="0.68"/><path d="M1088.0,461.6 C1102.1,461.6 1102.1,448.7 1116.1,448.7 L1116.1,453.9 C1102.1,453.9 1102.1,461.7 1088.0,461.7 Z" fill="#6B007B" fill-opacity="0.68"/><path d="M1088.0,461.3 C1102.1,461.3 1102.1,436.3 1116.1,436.3 L1116.1,443.6 C1102.1,443.6 1102.1,461.5 1088.0,461.5 Z" fill="#E044A7" fill-opacity="0.68"/><path d="M1088.0,461.5 C1102.1,461.5 1102.1,453.9 1116.1,453.9 L1116.1,456.4 C1102.1,456.4 1102.1,461.6 1088.0,461.6 Z" fill="#744EC2" fill-opacity="0.68"/><path d="M1088.0,462.0 C1102.1,462.0 1102.1,464.8 1116.1,464.8 L1116.1,469.0 C1102.1,469.0 1102.1,462.1 1088.0,462.1 Z" fill="#D9B300" fill-opacity="0.68"/><path d="M1088.0,462.1 C1102.1,462.1 1102.1,469.0 1116.1,469.0 L1116.1,473.0 C1102.1,473.0 1102.1,462.2 1088.0,462.2 Z" fill="#D64550" fill-opacity="0.68"/><path d="M1088.0,462.2 C1102.1,462.2 1102.1,473.0 1116.1,473.0 L1116.1,480.8 C1102.1,480.8 1102.1,462.4 1088.0,462.4 Z" fill="#197278" fill-opacity="0.68"/><path d="M1088.0,460.6 C1102.1,460.6 1102.1,443.6 1116.1,443.6 L1116.1,448.7 C1102.1,448.7 1102.1,460.9 1088.0,460.9 Z" fill="#1AAB40" fill-opacity="0.68"/><path d="M1088.0,461.1 C1102.1,461.1 1102.1,456.4 1116.1,456.4 L1116.1,459.4 C1102.1,459.4 1102.1,461.3 1088.0,461.3 Z" fill="#15C6F4" fill-opacity="0.68"/><path d="M1088.0,460.9 C1102.1,460.9 1102.1,461.0 1116.1,461.0 L1116.1,461.0 C1102.1,461.0 1102.1,461.1 1088.0,461.1 Z" fill="#4092FF" fill-opacity="0.68"/><path d="M1133.8,461.0 C1147.8,461.0 1147.8,470.3 1161.8,470.3 L1161.8,475.1 C1147.8,475.1 1147.8,462.7 1133.8,462.7 Z" fill="#118DFF" fill-opacity="0.68"/><path d="M1133.8,462.7 C1147.8,462.7 1147.8,475.1 1161.8,475.1 L1161.8,488.7 C1147.8,488.7 1147.8,464.8 1133.8,464.8 Z" fill="#12239E" fill-opacity="0.68"/><path d="M1133.8,459.4 C1147.8,459.4 1147.8,462.6 1161.8,462.6 L1161.8,466.5 C1147.8,466.5 1147.8,461.0 1133.8,461.0 Z" fill="#E66C37" fill-opacity="0.68"/><path d="M1133.8,448.7 C1147.8,448.7 1147.8,462.6 1161.8,462.6 L1161.8,462.6 C1147.8,462.6 1147.8,453.9 1133.8,453.9 Z" fill="#6B007B" fill-opacity="0.68"/><path d="M1133.8,436.3 C1147.8,436.3 1147.8,455.2 1161.8,455.2 L1161.8,462.6 C1147.8,462.6 1147.8,443.6 1133.8,443.6 Z" fill="#E044A7" fill-opacity="0.68"/><path d="M1133.8,453.9 C1147.8,453.9 1147.8,466.5 1161.8,466.5 L1161.8,470.3 C1147.8,470.3 1147.8,456.4 1133.8,456.4 Z" fill="#744EC2" fill-opacity="0.68"/><path d="M1133.8,464.8 C1147.8,464.8 1147.8,488.7 1161.8,488.7 L1161.8,523.7 C1147.8,523.7 1147.8,469.0 1133.8,469.0 Z" fill="#D9B300" fill-opacity="0.68"/><path d="M1133.8,469.0 C1147.8,469.0 1147.8,523.7 1161.8,523.7 L1161.8,571.8 C1147.8,571.8 1147.8,473.0 1133.8,473.0 Z" fill="#D64550" fill-opacity="0.68"/><path d="M1133.8,473.0 C1147.8,473.0 1147.8,571.8 1161.8,571.8 L1161.8,619.3 C1147.8,619.3 1147.8,480.8 1133.8,480.8 Z" fill="#197278" fill-opacity="0.68"/><path d="M1133.8,443.6 C1147.8,443.6 1147.8,387.9 1161.8,387.9 L1161.8,422.0 C1147.8,422.0 1147.8,448.7 1133.8,448.7 Z" fill="#1AAB40" fill-opacity="0.68"/><path d="M1133.8,456.4 C1147.8,456.4 1147.8,441.1 1161.8,441.1 L1161.8,455.2 C1147.8,455.2 1147.8,459.4 1133.8,459.4 Z" fill="#15C6F4" fill-opacity="0.68"/><path d="M1133.8,461.0 C1147.8,461.0 1147.8,422.0 1161.8,422.0 L1161.8,441.1 C1147.8,441.1 1147.8,461.0 1133.8,461.0 Z" fill="#4092FF" fill-opacity="0.68"/><path d="M1179.4,470.3 C1193.4,470.3 1193.4,483.6 1207.5,483.6 L1207.5,488.7 C1193.4,488.7 1193.4,475.1 1179.4,475.1 Z" fill="#118DFF" fill-opacity="0.68"/><path d="M1179.4,475.1 C1193.4,475.1 1193.4,488.7 1207.5,488.7 L1207.5,493.8 C1193.4,493.8 1193.4,488.7 1179.4,488.7 Z" fill="#12239E" fill-opacity="0.68"/><path d="M1179.4,462.6 C1193.4,462.6 1193.4,493.8 1207.5,493.8 L1207.5,499.5 C1193.4,499.5 1193.4,466.5 1179.4,466.5 Z" fill="#E66C37" fill-opacity="0.68"/><path d="M1179.4,462.6 C1193.4,462.6 1193.4,474.7 1207.5,474.7 L1207.5,479.2 C1193.4,479.2 1193.4,462.6 1179.4,462.6 Z" fill="#6B007B" fill-opacity="0.68"/><path d="M1179.4,455.2 C1193.4,455.2 1193.4,479.2 1207.5,479.2 L1207.5,483.6 C1193.4,483.6 1193.4,462.6 1179.4,462.6 Z" fill="#E044A7" fill-opacity="0.68"/><path d="M1179.4,466.5 C1193.4,466.5 1193.4,470.8 1207.5,470.8 L1207.5,474.7 C1193.4,474.7 1193.4,470.3 1179.4,470.3 Z" fill="#744EC2" fill-opacity="0.68"/><path d="M1179.4,488.7 C1193.4,488.7 1193.4,499.5 1207.5,499.5 L1207.5,505.2 C1193.4,505.2 1193.4,523.7 1179.4,523.7 Z" fill="#D9B300" fill-opacity="0.68"/><path d="M1179.4,523.7 C1193.4,523.7 1193.4,505.2 1207.5,505.2 L1207.5,511.0 C1193.4,511.0 1193.4,571.8 1179.4,571.8 Z" fill="#D64550" fill-opacity="0.68"/><path d="M1179.4,571.8 C1193.4,571.8 1193.4,511.0 1207.5,511.0 L1207.5,516.0 C1193.4,516.0 1193.4,619.3 1179.4,619.3 Z" fill="#197278" fill-opacity="0.68"/><path d="M1179.4,387.9 C1193.4,387.9 1193.4,464.3 1207.5,464.3 L1207.5,467.2 C1193.4,467.2 1193.4,422.0 1179.4,422.0 Z" fill="#1AAB40" fill-opacity="0.68"/><path d="M1179.4,441.1 C1193.4,441.1 1193.4,467.2 1207.5,467.2 L1207.5,470.8 C1193.4,470.8 1193.4,455.2 1179.4,455.2 Z" fill="#15C6F4" fill-opacity="0.68"/><path d="M1179.4,422.0 C1193.4,422.0 1193.4,462.2 1207.5,462.2 L1207.5,464.3 C1193.4,464.3 1193.4,441.1 1179.4,441.1 Z" fill="#4092FF" fill-opacity="0.68"/><path d="M1225.1,483.6 C1239.2,483.6 1239.2,457.6 1253.2,457.6 L1253.2,459.6 C1239.2,459.6 1239.2,488.7 1225.1,488.7 Z" fill="#118DFF" fill-opacity="0.68"/><path d="M1225.1,488.7 C1239.2,488.7 1239.2,459.6 1253.2,459.6 L1253.2,459.6 C1239.2,459.6 1239.2,493.8 1225.1,493.8 Z" fill="#12239E" fill-opacity="0.68"/><path d="M1225.1,493.8 C1239.2,493.8 1239.2,446.0 1253.2,446.0 L1253.2,452.6 C1239.2,452.6 1239.2,499.5 1225.1,499.5 Z" fill="#E66C37" fill-opacity="0.68"/><path d="M1225.1,474.7 C1239.2,474.7 1239.2,459.6 1253.2,459.6 L1253.2,462.4 C1239.2,462.4 1239.2,479.2 1225.1,479.2 Z" fill="#6B007B" fill-opacity="0.68"/><path d="M1225.1,479.2 C1239.2,479.2 1239.2,403.7 1253.2,403.7 L1253.2,419.6 C1239.2,419.6 1239.2,483.6 1225.1,483.6 Z" fill="#E044A7" fill-opacity="0.68"/><path d="M1225.1,470.8 C1239.2,470.8 1239.2,385.2 1253.2,385.2 L1253.2,403.7 C1239.2,403.7 1239.2,474.7 1225.1,474.7 Z" fill="#744EC2" fill-opacity="0.68"/><path d="M1225.1,499.5 C1239.2,499.5 1239.2,462.4 1253.2,462.4 L1253.2,477.8 C1239.2,477.8 1239.2,505.2 1225.1,505.2 Z" fill="#D9B300" fill-opacity="0.68"/><path d="M1225.1,505.2 C1239.2,505.2 1239.2,509.3 1253.2,509.3 L1253.2,542.0 C1239.2,542.0 1239.2,511.0 1225.1,511.0 Z" fill="#D64550" fill-opacity="0.68"/><path d="M1225.1,511.0 C1239.2,511.0 1239.2,477.8 1253.2,477.8 L1253.2,509.3 C1239.2,509.3 1239.2,516.0 1225.1,516.0 Z" fill="#197278" fill-opacity="0.68"/><path d="M1225.1,464.3 C1239.2,464.3 1239.2,419.6 1253.2,419.6 L1253.2,435.5 C1239.2,435.5 1239.2,467.2 1225.1,467.2 Z" fill="#1AAB40" fill-opacity="0.68"/><path d="M1225.1,467.2 C1239.2,467.2 1239.2,452.6 1253.2,452.6 L1253.2,457.6 C1239.2,457.6 1239.2,470.8 1225.1,470.8 Z" fill="#15C6F4" fill-opacity="0.68"/><path d="M1225.1,462.2 C1239.2,462.2 1239.2,435.5 1253.2,435.5 L1253.2,446.0 C1239.2,446.0 1239.2,464.3 1225.1,464.3 Z" fill="#4092FF" fill-opacity="0.68"/><path d="M1270.8,457.6 C1284.8,457.6 1284.8,462.9 1298.9,462.9 L1298.9,462.9 C1284.8,462.9 1284.8,459.6 1270.8,459.6 Z" fill="#118DFF" fill-opacity="0.68"/><path d="M1270.8,459.6 C1284.8,459.6 1284.8,463.9 1298.9,463.9 L1298.9,465.5 C1284.8,465.5 1284.8,459.6 1270.8,459.6 Z" fill="#12239E" fill-opacity="0.68"/><path d="M1270.8,446.0 C1284.8,446.0 1284.8,462.9 1298.9,462.9 L1298.9,463.9 C1284.8,463.9 1284.8,452.6 1270.8,452.6 Z" fill="#E66C37" fill-opacity="0.68"/><path d="M1270.8,459.6 C1284.8,459.6 1284.8,462.9 1298.9,462.9 L1298.9,462.9 C1284.8,462.9 1284.8,462.4 1270.8,462.4 Z" fill="#6B007B" fill-opacity="0.68"/><path d="M1270.8,403.7 C1284.8,403.7 1284.8,459.1 1298.9,459.1 L1298.9,460.7 C1284.8,460.7 1284.8,419.6 1270.8,419.6 Z" fill="#E044A7" fill-opacity="0.68"/><path d="M1270.8,385.2 C1284.8,385.2 1284.8,462.0 1298.9,462.0 L1298.9,462.9 C1284.8,462.9 1284.8,403.7 1270.8,403.7 Z" fill="#744EC2" fill-opacity="0.68"/><path d="M1270.8,462.4 C1284.8,462.4 1284.8,467.4 1298.9,467.4 L1298.9,469.9 C1284.8,469.9 1284.8,477.8 1270.8,477.8 Z" fill="#D9B300" fill-opacity="0.68"/><path d="M1270.8,509.3 C1284.8,509.3 1284.8,465.5 1298.9,465.5 L1298.9,467.4 C1284.8,467.4 1284.8,542.0 1270.8,542.0 Z" fill="#D64550" fill-opacity="0.68"/><path d="M1270.8,477.8 C1284.8,477.8 1284.8,469.9 1298.9,469.9 L1298.9,472.8 C1284.8,472.8 1284.8,509.3 1270.8,509.3 Z" fill="#197278" fill-opacity="0.68"/><path d="M1270.8,419.6 C1284.8,419.6 1284.8,456.6 1298.9,456.6 L1298.9,459.1 C1284.8,459.1 1284.8,435.5 1270.8,435.5 Z" fill="#1AAB40" fill-opacity="0.68"/><path d="M1270.8,452.6 C1284.8,452.6 1284.8,460.7 1298.9,460.7 L1298.9,462.0 C1284.8,462.0 1284.8,457.6 1270.8,457.6 Z" fill="#15C6F4" fill-opacity="0.68"/><path d="M1270.8,435.5 C1284.8,435.5 1284.8,453.4 1298.9,453.4 L1298.9,456.6 C1284.8,456.6 1284.8,446.0 1270.8,446.0 Z" fill="#4092FF" fill-opacity="0.68"/><path d="M1316.5,463.9 C1330.6,463.9 1330.6,463.8 1344.6,463.8 L1344.6,463.9 C1330.6,463.9 1330.6,465.5 1316.5,465.5 Z" fill="#12239E" fill-opacity="0.68"/><path d="M1316.5,462.9 C1330.6,462.9 1330.6,463.9 1344.6,463.9 L1344.6,464.0 C1330.6,464.0 1330.6,463.9 1316.5,463.9 Z" fill="#E66C37" fill-opacity="0.68"/><path d="M1316.5,459.1 C1330.6,459.1 1330.6,463.4 1344.6,463.4 L1344.6,463.6 C1330.6,463.6 1330.6,460.7 1316.5,460.7 Z" fill="#E044A7" fill-opacity="0.68"/><path d="M1316.5,462.0 C1330.6,462.0 1330.6,462.1 1344.6,462.1 L1344.6,463.4 C1330.6,463.4 1330.6,462.9 1316.5,462.9 Z" fill="#744EC2" fill-opacity="0.68"/><path d="M1316.5,467.4 C1330.6,467.4 1330.6,465.0 1344.6,465.0 L1344.6,465.8 C1330.6,465.8 1330.6,469.9 1316.5,469.9 Z" fill="#D9B300" fill-opacity="0.68"/><path d="M1316.5,465.5 C1330.6,465.5 1330.6,463.6 1344.6,463.6 L1344.6,463.8 C1330.6,463.8 1330.6,467.4 1316.5,467.4 Z" fill="#D64550" fill-opacity="0.68"/><path d="M1316.5,469.9 C1330.6,469.9 1330.6,464.0 1344.6,464.0 L1344.6,465.0 C1330.6,465.0 1330.6,472.8 1316.5,472.8 Z" fill="#197278" fill-opacity="0.68"/><path d="M1316.5,456.6 C1330.6,456.6 1330.6,461.0 1344.6,461.0 L1344.6,462.1 C1330.6,462.1 1330.6,459.1 1316.5,459.1 Z" fill="#1AAB40" fill-opacity="0.68"/><path d="M1316.5,460.7 C1330.6,460.7 1330.6,458.9 1344.6,458.9 L1344.6,459.9 C1330.6,459.9 1330.6,462.0 1316.5,462.0 Z" fill="#15C6F4" fill-opacity="0.68"/><path d="M1316.5,453.4 C1330.6,453.4 1330.6,459.9 1344.6,459.9 L1344.6,461.0 C1330.6,461.0 1330.6,456.6 1316.5,456.6 Z" fill="#4092FF" fill-opacity="0.68"/><rect x="750.4" y="461.0" width="17.7" height="0.20" fill="#1AAB40"/><rect x="750.4" y="461.2" width="17.7" height="0.20" fill="#4092FF"/><rect x="750.4" y="461.4" width="17.7" height="0.20" fill="#15C6F4"/><rect x="750.4" y="461.6" width="17.7" height="0.20" fill="#744EC2"/><rect x="750.4" y="461.8" width="17.7" height="0.20" fill="#6B007B"/><rect x="750.4" y="462.0" width="17.7" height="0.20" fill="#E66C37"/><rect x="750.4" y="462.2" width="17.7" height="0.20" fill="#118DFF"/><rect x="750.4" y="462.4" width="17.7" height="0.20" fill="#D64550"/><rect x="750.4" y="462.6" width="17.7" height="0.20" fill="#12239E"/><rect x="750.4" y="462.8" width="17.7" height="0.20" fill="#197278"/><rect x="750.4" y="463.0" width="17.7" height="0.10" fill="#D9B300"/><rect x="796.1" y="374.0" width="17.7" height="28.00" fill="#1AAB40"/><rect x="796.1" y="402.0" width="17.7" height="25.50" fill="#4092FF"/><rect x="796.1" y="427.5" width="17.7" height="21.70" fill="#15C6F4"/><rect x="796.1" y="449.2" width="17.7" height="8.80" fill="#744EC2"/><rect x="796.1" y="458.0" width="17.7" height="4.00" fill="#6B007B"/><rect x="796.1" y="462.0" width="17.7" height="8.80" fill="#E66C37"/><rect x="796.1" y="470.8" width="17.7" height="8.40" fill="#118DFF"/><rect x="796.1" y="479.2" width="17.7" height="11.20" fill="#D64550"/><rect x="796.1" y="490.4" width="17.7" height="13.60" fill="#12239E"/><rect x="796.1" y="504.0" width="17.7" height="18.50" fill="#197278"/><rect x="796.1" y="522.5" width="17.7" height="17.90" fill="#D9B300"/><rect x="841.8" y="458.9" width="17.7" height="1.00" fill="#4092FF"/><rect x="841.8" y="459.9" width="17.7" height="1.10" fill="#1AAB40"/><rect x="841.8" y="461.0" width="17.7" height="1.00" fill="#15C6F4"/><rect x="841.8" y="462.0" width="17.7" height="0.20" fill="#6B007B"/><rect x="841.8" y="462.2" width="17.7" height="0.30" fill="#E044A7"/><rect x="841.8" y="462.5" width="17.7" height="0.30" fill="#744EC2"/><rect x="841.8" y="462.8" width="17.7" height="0.80" fill="#E66C37"/><rect x="841.8" y="463.6" width="17.7" height="0.20" fill="#118DFF"/><rect x="841.8" y="463.8" width="17.7" height="0.20" fill="#D64550"/><rect x="841.8" y="464.0" width="17.7" height="0.20" fill="#12239E"/><rect x="841.8" y="464.2" width="17.7" height="0.70" fill="#197278"/><rect x="841.8" y="464.9" width="17.7" height="0.10" fill="#D9B300"/><rect x="887.5" y="407.1" width="17.7" height="19.60" fill="#1AAB40"/><rect x="887.5" y="426.7" width="17.7" height="19.30" fill="#15C6F4"/><rect x="887.5" y="446.0" width="17.7" height="15.40" fill="#4092FF"/><rect x="887.5" y="461.4" width="17.7" height="1.80" fill="#6B007B"/><rect x="887.5" y="463.2" width="17.7" height="2.90" fill="#E66C37"/><rect x="887.5" y="466.1" width="17.7" height="4.10" fill="#118DFF"/><rect x="887.5" y="470.2" width="17.7" height="6.20" fill="#D64550"/><rect x="887.5" y="476.4" width="17.7" height="7.10" fill="#197278"/><rect x="887.5" y="483.5" width="17.7" height="6.60" fill="#12239E"/><rect x="887.5" y="490.1" width="17.7" height="8.30" fill="#D9B300"/><rect x="933.2" y="462.1" width="17.7" height="1.80" fill="#1AAB40"/><rect x="933.2" y="463.9" width="17.7" height="2.10" fill="#15C6F4"/><rect x="933.2" y="466.0" width="17.7" height="2.70" fill="#4092FF"/><rect x="933.2" y="468.7" width="17.7" height="2.70" fill="#6B007B"/><rect x="933.2" y="471.4" width="17.7" height="3.00" fill="#744EC2"/><rect x="933.2" y="474.4" width="17.7" height="3.10" fill="#E044A7"/><rect x="933.2" y="477.5" width="17.7" height="3.40" fill="#E66C37"/><rect x="933.2" y="480.9" width="17.7" height="3.50" fill="#118DFF"/><rect x="933.2" y="484.4" width="17.7" height="4.20" fill="#197278"/><rect x="933.2" y="488.6" width="17.7" height="3.40" fill="#12239E"/><rect x="933.2" y="492.0" width="17.7" height="3.80" fill="#D9B300"/><rect x="933.2" y="495.8" width="17.7" height="3.90" fill="#D64550"/><rect x="978.9" y="454.2" width="17.7" height="2.70" fill="#1AAB40"/><rect x="978.9" y="456.9" width="17.7" height="2.10" fill="#4092FF"/><rect x="978.9" y="459.0" width="17.7" height="2.10" fill="#15C6F4"/><rect x="978.9" y="461.1" width="17.7" height="0.50" fill="#6B007B"/><rect x="978.9" y="461.6" width="17.7" height="0.50" fill="#744EC2"/><rect x="978.9" y="462.1" width="17.7" height="0.90" fill="#E044A7"/><rect x="978.9" y="463.0" width="17.7" height="0.50" fill="#118DFF"/><rect x="978.9" y="463.5" width="17.7" height="0.60" fill="#12239E"/><rect x="978.9" y="464.1" width="17.7" height="0.80" fill="#E66C37"/><rect x="978.9" y="464.9" width="17.7" height="0.90" fill="#D64550"/><rect x="978.9" y="465.8" width="17.7" height="1.20" fill="#D9B300"/><rect x="978.9" y="467.0" width="17.7" height="0.90" fill="#197278"/><rect x="1024.7" y="399.1" width="17.7" height="18.90" fill="#4092FF"/><rect x="1024.7" y="418.0" width="17.7" height="16.90" fill="#15C6F4"/><rect x="1024.7" y="434.9" width="17.7" height="14.00" fill="#1AAB40"/><rect x="1024.7" y="448.9" width="17.7" height="10.50" fill="#E044A7"/><rect x="1024.7" y="459.4" width="17.7" height="2.90" fill="#744EC2"/><rect x="1024.7" y="462.3" width="17.7" height="1.60" fill="#E66C37"/><rect x="1024.7" y="463.9" width="17.7" height="2.90" fill="#12239E"/><rect x="1024.7" y="466.8" width="17.7" height="4.10" fill="#118DFF"/><rect x="1024.7" y="470.9" width="17.7" height="5.40" fill="#197278"/><rect x="1024.7" y="476.3" width="17.7" height="5.70" fill="#D9B300"/><rect x="1024.7" y="482.0" width="17.7" height="5.80" fill="#D64550"/><rect x="1070.4" y="460.6" width="17.7" height="0.30" fill="#1AAB40"/><rect x="1070.4" y="460.9" width="17.7" height="0.20" fill="#4092FF"/><rect x="1070.4" y="461.1" width="17.7" height="0.20" fill="#15C6F4"/><rect x="1070.4" y="461.3" width="17.7" height="0.20" fill="#E044A7"/><rect x="1070.4" y="461.5" width="17.7" height="0.10" fill="#744EC2"/><rect x="1070.4" y="461.6" width="17.7" height="0.10" fill="#6B007B"/><rect x="1070.4" y="461.7" width="17.7" height="0.10" fill="#E66C37"/><rect x="1070.4" y="461.8" width="17.7" height="0.10" fill="#118DFF"/><rect x="1070.4" y="461.9" width="17.7" height="0.10" fill="#12239E"/><rect x="1070.4" y="462.0" width="17.7" height="0.10" fill="#D9B300"/><rect x="1070.4" y="462.1" width="17.7" height="0.10" fill="#D64550"/><rect x="1070.4" y="462.2" width="17.7" height="0.20" fill="#197278"/><rect x="1116.1" y="436.3" width="17.7" height="7.30" fill="#E044A7"/><rect x="1116.1" y="443.6" width="17.7" height="5.10" fill="#1AAB40"/><rect x="1116.1" y="448.7" width="17.7" height="5.20" fill="#6B007B"/><rect x="1116.1" y="453.9" width="17.7" height="2.50" fill="#744EC2"/><rect x="1116.1" y="456.4" width="17.7" height="3.00" fill="#15C6F4"/><rect x="1116.1" y="459.4" width="17.7" height="1.60" fill="#E66C37"/><rect x="1116.1" y="461.0" width="17.7" height="1.70" fill="#118DFF"/><rect x="1116.1" y="462.7" width="17.7" height="2.10" fill="#12239E"/><rect x="1116.1" y="464.8" width="17.7" height="4.20" fill="#D9B300"/><rect x="1116.1" y="469.0" width="17.7" height="4.00" fill="#D64550"/><rect x="1116.1" y="473.0" width="17.7" height="7.80" fill="#197278"/><rect x="1161.8" y="387.9" width="17.7" height="34.10" fill="#1AAB40"/><rect x="1161.8" y="422.0" width="17.7" height="19.10" fill="#4092FF"/><rect x="1161.8" y="441.1" width="17.7" height="14.10" fill="#15C6F4"/><rect x="1161.8" y="455.2" width="17.7" height="7.40" fill="#E044A7"/><rect x="1161.8" y="462.6" width="17.7" height="3.90" fill="#E66C37"/><rect x="1161.8" y="466.5" width="17.7" height="3.80" fill="#744EC2"/><rect x="1161.8" y="470.3" width="17.7" height="4.80" fill="#118DFF"/><rect x="1161.8" y="475.1" width="17.7" height="13.60" fill="#12239E"/><rect x="1161.8" y="488.7" width="17.7" height="35.00" fill="#D9B300"/><rect x="1161.8" y="523.7" width="17.7" height="48.10" fill="#D64550"/><rect x="1161.8" y="571.8" width="17.7" height="47.50" fill="#197278"/><rect x="1207.5" y="462.2" width="17.7" height="2.10" fill="#4092FF"/><rect x="1207.5" y="464.3" width="17.7" height="2.90" fill="#1AAB40"/><rect x="1207.5" y="467.2" width="17.7" height="3.60" fill="#15C6F4"/><rect x="1207.5" y="470.8" width="17.7" height="3.90" fill="#744EC2"/><rect x="1207.5" y="474.7" width="17.7" height="4.50" fill="#6B007B"/><rect x="1207.5" y="479.2" width="17.7" height="4.40" fill="#E044A7"/><rect x="1207.5" y="483.6" width="17.7" height="5.10" fill="#118DFF"/><rect x="1207.5" y="488.7" width="17.7" height="5.10" fill="#12239E"/><rect x="1207.5" y="493.8" width="17.7" height="5.70" fill="#E66C37"/><rect x="1207.5" y="499.5" width="17.7" height="5.70" fill="#D9B300"/><rect x="1207.5" y="505.2" width="17.7" height="5.80" fill="#D64550"/><rect x="1207.5" y="511.0" width="17.7" height="5.00" fill="#197278"/><rect x="1253.2" y="385.2" width="17.7" height="18.50" fill="#744EC2"/><rect x="1253.2" y="403.7" width="17.7" height="15.90" fill="#E044A7"/><rect x="1253.2" y="419.6" width="17.7" height="15.90" fill="#1AAB40"/><rect x="1253.2" y="435.5" width="17.7" height="10.50" fill="#4092FF"/><rect x="1253.2" y="446.0" width="17.7" height="6.60" fill="#E66C37"/><rect x="1253.2" y="452.6" width="17.7" height="5.00" fill="#15C6F4"/><rect x="1253.2" y="457.6" width="17.7" height="2.00" fill="#118DFF"/><rect x="1253.2" y="459.6" width="17.7" height="2.80" fill="#6B007B"/><rect x="1253.2" y="462.4" width="17.7" height="15.40" fill="#D9B300"/><rect x="1253.2" y="477.8" width="17.7" height="31.50" fill="#197278"/><rect x="1253.2" y="509.3" width="17.7" height="32.70" fill="#D64550"/><rect x="1298.9" y="453.4" width="17.7" height="3.20" fill="#4092FF"/><rect x="1298.9" y="456.6" width="17.7" height="2.50" fill="#1AAB40"/><rect x="1298.9" y="459.1" width="17.7" height="1.60" fill="#E044A7"/><rect x="1298.9" y="460.7" width="17.7" height="1.30" fill="#15C6F4"/><rect x="1298.9" y="462.0" width="17.7" height="0.90" fill="#744EC2"/><rect x="1298.9" y="462.9" width="17.7" height="1.00" fill="#E66C37"/><rect x="1298.9" y="463.9" width="17.7" height="1.60" fill="#12239E"/><rect x="1298.9" y="465.5" width="17.7" height="1.90" fill="#D64550"/><rect x="1298.9" y="467.4" width="17.7" height="2.50" fill="#D9B300"/><rect x="1298.9" y="469.9" width="17.7" height="2.90" fill="#197278"/><rect x="1344.6" y="458.9" width="17.7" height="1.00" fill="#15C6F4"/><rect x="1344.6" y="459.9" width="17.7" height="1.10" fill="#4092FF"/><rect x="1344.6" y="461.0" width="17.7" height="1.10" fill="#1AAB40"/><rect x="1344.6" y="462.1" width="17.7" height="1.30" fill="#744EC2"/><rect x="1344.6" y="463.4" width="17.7" height="0.20" fill="#E044A7"/><rect x="1344.6" y="463.6" width="17.7" height="0.20" fill="#D64550"/><rect x="1344.6" y="463.8" width="17.7" height="0.10" fill="#12239E"/><rect x="1344.6" y="463.9" width="17.7" height="0.10" fill="#E66C37"/><rect x="1344.6" y="464.0" width="17.7" height="1.00" fill="#197278"/><rect x="1344.6" y="465.0" width="17.7" height="0.80" fill="#D9B300"/><circle cx="764.9" cy="321.5" r="5.3" fill="#118DFF"/><circle cx="833.7" cy="321.5" r="5.3" fill="#12239E"/><circle cx="910.9" cy="321.5" r="5.3" fill="#E66C37"/><circle cx="972" cy="321.5" r="5.3" fill="#6B007B"/><circle cx="1023.2" cy="321.5" r="5.3" fill="#E044A7"/><circle cx="1071.4" cy="321.5" r="5.3" fill="#744EC2"/><circle cx="1120.9" cy="321.5" r="5.3" fill="#D9B300"/><circle cx="1165" cy="321.5" r="5.3" fill="#D64550"/><circle cx="1231.4" cy="321.5" r="5.3" fill="#197278"/><polygon points="1362.5,315.5 1368.5,321.8 1362.5,328" fill="#252423"/></svg>
<div class="t" style="left:747.7px;top:637.5px;font-size:13px;line-height:13px;color:#605E5C;transform:translateX(-100%) rotate(-35deg);transform-origin:right top;">Accessories</div>
<div class="t" style="left:793.4px;top:637.5px;font-size:13px;line-height:13px;color:#605E5C;transform:translateX(-100%) rotate(-35deg);transform-origin:right top;">Air Conditioners</div>
<div class="t" style="left:839.1px;top:637.5px;font-size:13px;line-height:13px;color:#605E5C;transform:translateX(-100%) rotate(-35deg);transform-origin:right top;">Audio &amp; Video</div>
<div class="t" style="left:884.8px;top:637.5px;font-size:13px;line-height:13px;color:#605E5C;transform:translateX(-100%) rotate(-35deg);transform-origin:right top;">Computers &amp; Laptops</div>
<div class="t" style="left:930.5px;top:637.5px;font-size:13px;line-height:13px;color:#605E5C;transform:translateX(-100%) rotate(-35deg);transform-origin:right top;">Cooking Appliances</div>
<div class="t" style="left:976.2px;top:637.5px;font-size:13px;line-height:13px;color:#605E5C;transform:translateX(-100%) rotate(-35deg);transform-origin:right top;">Home Care</div>
<div class="t" style="left:1021.9px;top:637.5px;font-size:13px;line-height:13px;color:#605E5C;transform:translateX(-100%) rotate(-35deg);transform-origin:right top;">Mobile Devices</div>
<div class="t" style="left:1067.6px;top:637.5px;font-size:13px;line-height:13px;color:#605E5C;transform:translateX(-100%) rotate(-35deg);transform-origin:right top;">Networking</div>
<div class="t" style="left:1113.3px;top:637.5px;font-size:13px;line-height:13px;color:#605E5C;transform:translateX(-100%) rotate(-35deg);transform-origin:right top;">Photography</div>
<div class="t" style="left:1159.0px;top:637.5px;font-size:13px;line-height:13px;color:#605E5C;transform:translateX(-100%) rotate(-35deg);transform-origin:right top;">Refrigerators</div>
<div class="t" style="left:1204.7px;top:637.5px;font-size:13px;line-height:13px;color:#605E5C;transform:translateX(-100%) rotate(-35deg);transform-origin:right top;">Small Kitchen Appliances</div>
<div class="t" style="left:1250.4px;top:637.5px;font-size:13px;line-height:13px;color:#605E5C;transform:translateX(-100%) rotate(-35deg);transform-origin:right top;">Televisions</div>
<div class="t" style="left:1296.1px;top:637.5px;font-size:13px;line-height:13px;color:#605E5C;transform:translateX(-100%) rotate(-35deg);transform-origin:right top;">Washing Machines</div>
<div class="t" style="left:1341.8px;top:637.5px;font-size:13px;line-height:13px;color:#605E5C;transform:translateX(-100%) rotate(-35deg);transform-origin:right top;">Water &amp; Beverage</div>
</body></html>
